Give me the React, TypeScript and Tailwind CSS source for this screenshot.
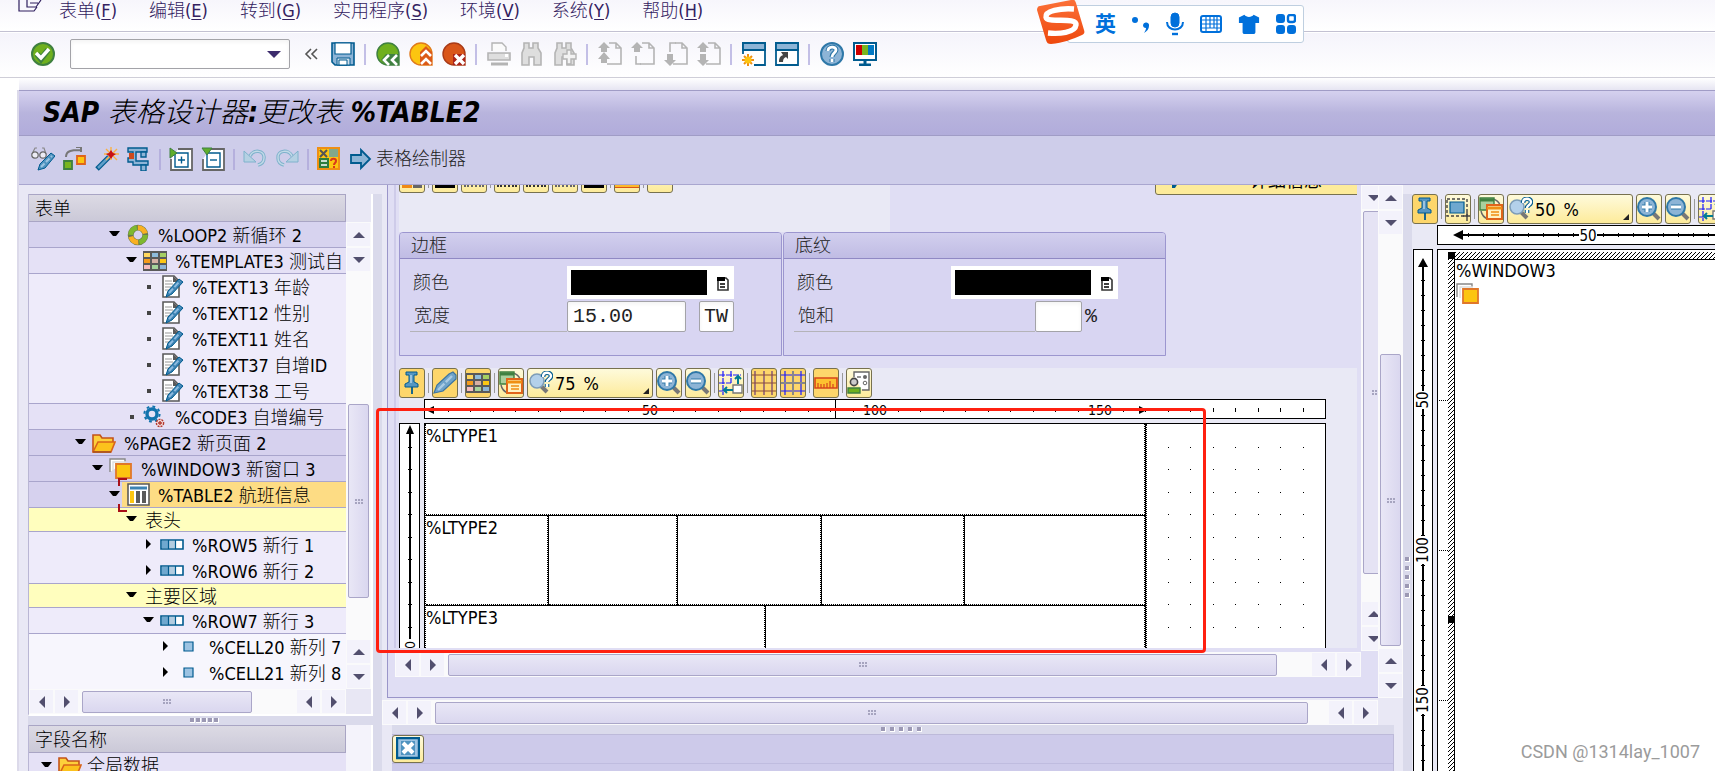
import type { ReactNode } from 'react';

const SANS = "font-['DejaVu_Sans_Condensed','Noto_Sans_CJK_SC',sans-serif]";

/* ---------- 共通アイコン枠 ---------- */

const Icon = ({ children, className = 'w-6 h-6' }: { children: ReactNode; className?: string }) => (
  <svg viewBox="0 0 24 24" className={`${className} shrink-0`} fill="none" aria-hidden="true">
    {children}
  </svg>
);

const BLUE = '#005b8f';
const SKY = '#8db4d6';
const GRAY = '#b4b4b4';

const OkIcon = () => (
  <Icon>
    <circle cx="12" cy="12" r="11" fill="#6fb01e" stroke="#3f8040" strokeWidth="2" />
    <path d="M6 12l4 5 7-9" stroke="#3f8040" strokeWidth="6" />
    <path d="M5 11l5 5 8-9" stroke="#fff" strokeWidth="3.4" />
  </Icon>
);

const SaveIcon = () => (
  <Icon>
    <path d="M1 1h22v22H4l-3-3z" fill={SKY} stroke={BLUE} strokeWidth="1.6" />
    <path d="M4 1h16v11H4z" fill="#fff" stroke={BLUE} strokeWidth="1.2" />
    <path d="M6 16h13v7H6z" fill="#cfdfec" stroke={BLUE} />
    <path d="M8 18h8v5H8z" fill="#fff" stroke={BLUE} />
  </Icon>
);

const BackIcon = () => (
  <Icon>
    <path d="M12 1a11 11 0 1 0 0 22h11V12A11 11 0 0 0 12 1z" fill="#6fb01e" stroke="#3f8040" strokeWidth="1.4" />
    <path d="M10 12h13v11H10l-5-5z" fill="#3f8040" />
    <path d="M13 13l-5 5 5 5M21 13l-5 5 5 5" stroke="#fff" strokeWidth="2.6" />
  </Icon>
);

const ExitIcon = () => (
  <Icon>
    <path d="M12 1a11 11 0 1 0 0 22h11V12A11 11 0 0 0 12 1z" fill="#fcc510" stroke="#e07a1b" strokeWidth="1.4" />
    <path d="M11 10l6-6 6 6v13H11z" fill="#dc5a17" />
    <path d="M12 14l5-5 5 5M12 22l5-5 5 5" stroke="#fff" strokeWidth="2.6" />
  </Icon>
);

const CancelIcon = () => (
  <Icon>
    <path d="M12 1a11 11 0 1 0 0 22h11V12A11 11 0 0 0 12 1z" fill="#d9561a" stroke="#a93b18" strokeWidth="1.4" />
    <path d="M11 12h12v11H11z" fill="#ab2318" />
    <path d="M13 13l9 9M22 13l-9 9" stroke="#fff" strokeWidth="3.4" />
  </Icon>
);

const PrintIcon = () => (
  <Icon>
    <path d="M5 9V1h10l4 4v4" fill="#fafafa" stroke={GRAY} strokeWidth="1.4" />
    <path d="M1 11h22v7H1z" fill="#dedede" stroke={GRAY} strokeWidth="1.6" />
    <path d="M18 12h3v3h-3z" fill="#fff" />
    <path d="M4 22h17" stroke={GRAY} strokeWidth="3" />
  </Icon>
);

const FindIcon = ({ plus = false }: { plus?: boolean }) => (
  <Icon>
    <path d="M4 1h5v5h4V1h5v5l3 5v12h-7v-8h-5v8H2V11l2-5z" fill="#dedede" stroke={GRAY} strokeWidth="1.6" />
    {plus && <path d="M14 8h4v4h5v5h-5v5h-4v-5h-4v-5h4z" fill="#f2f2f2" stroke={GRAY} strokeWidth="1.4" />}
  </Icon>
);

const PageIcon = ({ up = false, down = false, low = false }: { up?: boolean; down?: boolean; low?: boolean }) => (
  <Icon>
    <path d="M11 1h7l5 5v16H9M18 1v5h5" stroke={GRAY} strokeWidth="1.6" />
    {up && <path d="M6 0l6 6H9v4H3V6H0z" fill={GRAY} />}
    {up && down && <path d="M6 10l6 7H9v4H3v-4H0z" fill={GRAY} />}
    {up && !down && !low && <path d="M5 14v8h5" stroke={GRAY} strokeWidth="1.6" />}
    {low && <path d="M6 24l6-6H9v-6H3v6H0z" fill={GRAY} />}
    {!up && <path d="M6 10V1h6" stroke={GRAY} strokeWidth="1.6" />}
  </Icon>
);

const SessionIcon = ({ shortcut = false }: { shortcut?: boolean }) => (
  <Icon>
    <path d="M1 1h22v22H1z" fill="#fff" stroke={BLUE} strokeWidth="1.8" />
    <path d="M1 1h22v7H1z" fill={SKY} stroke={BLUE} strokeWidth="1.8" />
    {shortcut ? (
      <path d="M4 20c0-5 2-6 4-7l-2-3h7v7l-2-2c-2 1-3 2-3 5z" fill="#444" />
    ) : (
      <g>
        <path d="M0 12h12v12H0z" fill="#fff" />
        <path d="M6 12v12M0 18h12M2 14l8 8M10 14l-8 8" stroke="#ef8f13" strokeWidth="2" />
        <circle cx="6" cy="18" r="3.5" fill="#fcc510" />
      </g>
    )}
  </Icon>
);

const HelpIcon = () => (
  <Icon>
    <circle cx="12" cy="12" r="11" fill={SKY} stroke="#2f78a8" strokeWidth="2" />
    <path d="M8 9c0-5 8-5 8-1 0 3-4 3-4 7M12 17v3" stroke="#2f78a8" strokeWidth="5" />
    <path d="M8 9c0-5 8-5 8-1 0 3-4 3-4 7M12 17v3" stroke="#fff" strokeWidth="2.8" />
  </Icon>
);

const MonitorIcon = () => (
  <Icon>
    <path d="M1 1h22v17H1z" fill="#fff" stroke={BLUE} strokeWidth="2" />
    <path d="M3 3h6v10H3z" fill="#c00" />
    <path d="M9 3h6v10H9z" fill="#79b51f" />
    <path d="M15 3h6v10h-6z" fill="#0079c4" />
    <path d="M12 18v4M6 23h12" stroke={BLUE} strokeWidth="3" />
  </Icon>
);

const DisplayEditIcon = () => (
  <Icon>
    <path d="M1 7l3-6h2M15 7l-2-6h-2" stroke="#888" strokeWidth="1.2" />
    <circle cx="4" cy="8" r="3.2" fill="#ececf4" stroke="#666" strokeWidth="1.2" />
    <circle cx="12" cy="8" r="3.2" fill="#ececf4" stroke="#666" strokeWidth="1.2" />
    <path d="M7 23l2-6L20 6l4 3-10 12z" fill="#4f93c0" stroke={BLUE} />
    <path d="M10 20L21 9" stroke="#9cc4e0" strokeWidth="2" strokeDasharray="5 2" />
  </Icon>
);

const OtherObjectIcon = () => (
  <Icon>
    <path d="M3 10C3 4 8 3 17 3M13 0h5v5" stroke="#777" strokeWidth="2" />
    <path d="M1 14h8v8H1z" fill="#79b51f" stroke="#3f8040" strokeWidth="1.8" />
    <path d="M14 9h8v8h-8z" fill="#fcc510" stroke="#e0641b" strokeWidth="1.8" />
  </Icon>
);

const WandIcon = () => (
  <Icon>
    <path d="M2 22L14 10" stroke={BLUE} strokeWidth="5" />
    <path d="M3 21L14 10" stroke="#5f9ec8" strokeWidth="2.5" />
    <path d="M16 0v13M9 7h15M11 2l11 11M22 2L11 13" stroke="#fbb040" strokeWidth="1.4" />
    <path d="M16 3l2 3 3 1-3 2-2 3-2-3-3-2 3-1z" fill="#c80f14" />
  </Icon>
);

const CheckFormIcon = () => (
  <Icon>
    <path d="M1 1h19v4H9v9h12v4H6v-3H1v-4h5V5H1z" fill={SKY} stroke={BLUE} strokeWidth="1.4" />
    <path d="M14 5h5v5h-5zM14 18h5v6h-5z" fill={SKY} stroke={BLUE} strokeWidth="1.4" />
    <path d="M2 6h5v6H2z" fill="#cf4a1d" />
  </Icon>
);

const NodeIcon = ({ minus = false }: { minus?: boolean }) => (
  <Icon>
    <path d="M9 2h14v21H2V12" fill="#fff" stroke="#666" strokeWidth="1.8" />
    <path d="M6 6h13v14H6z" fill="#fff" stroke={BLUE} strokeWidth="1.4" />
    <path d={minus ? 'M9 13h7' : 'M9 13h7M12.5 9.5v7'} stroke={BLUE} strokeWidth="1.4" />
    <path d={minus ? 'M1 1h10L6 8z' : 'M1 1v10l7-5z'} fill="#5fae2c" stroke="#3f8040" />
  </Icon>
);

const UndoIcon = ({ redo = false }: { redo?: boolean }) => (
  <Icon>
    <g transform={redo ? 'translate(24 0) scale(-1 1)' : undefined}>
      <path d="M7 9c3-7 15-6 14 2 0 4-2 6-6 7" stroke="#7fb2cc" strokeWidth="3.4" />
      <path d="M7 9c3-7 15-6 14 2 0 4-2 6-6 7" stroke="#c3dae8" strokeWidth="1.4" />
      <path d="M1 4v11h12z" fill="#b5d1e3" stroke="#7fb2cc" />
    </g>
  </Icon>
);

const FieldListIcon = () => (
  <Icon>
    <path d="M1 1h21v21H1z" fill="#fcc510" stroke="#ef8f13" strokeWidth="2" />
    <path d="M12 2h9v8h-9z" fill="#83a88a" />
    <path d="M2 11h10v10H2z" fill="#2f7d3d" />
    <path d="M3 3l7 7M10 3l-7 7" stroke="#555" strokeWidth="2" />
    <path d="M4 14h6M4 18h6" stroke="#fff" strokeWidth="1.6" />
    <path d="M14 14c0-3 5-3 5 0 0 2-2 2-2 4M17 19v2" stroke="#d9381a" strokeWidth="2" />
  </Icon>
);

const ArrowIcon = () => (
  <Icon>
    <path d="M2 8h10V3l9 9-9 9v-5H2z" fill={SKY} stroke={BLUE} strokeWidth="1.8" />
  </Icon>
);

const LoopIcon = () => (
  <Icon className="w-[22px] h-[22px]">
    <circle cx="12" cy="12" r="8" stroke="#6a7a4a" strokeWidth="6.4" />
    <circle cx="12" cy="12" r="8" stroke="#f9b021" strokeWidth="5.4" strokeDasharray="11 14.13" strokeDashoffset="13" />
    <circle cx="12" cy="12" r="8" stroke="#7eb82f" strokeWidth="5.4" strokeDasharray="11 14.13" />
  </Icon>
);

const GridIcon = () => (
  <Icon>
    <path d="M0 2h24v20H0z" fill="#5a5a5a" />
    {['#ffd75e', '#8fbcdc', '#a5cf62', '#f59b1b', '#d6b0a4', '#fdc613', '#f6bcbc', '#a5d39b', '#8db4d6'].map((c, i) => (
      <rect key={i} x={1 + (i % 3) * 8} y={4 + Math.floor(i / 3) * 6} width="6" height="4" fill={c} />
    ))}
  </Icon>
);

const TextIcon = () => (
  <Icon>
    <path d="M3 1h11l5 5v16H3z" fill="#fff" stroke="#5a5a5a" strokeWidth="1.6" />
    <path d="M13 1v6h6z" fill="#5a5a5a" />
    <path d="M5 6h7M5 9h8M5 12h6M5 15h4" stroke="#bbb" strokeWidth="1.4" />
    <path d="M6 22l2-6L19 4l4 3-11 12z" fill="#3d83b3" stroke={BLUE} />
    <path d="M9 18L20 6" stroke="#8dbbe0" strokeWidth="2" strokeDasharray="6 2" />
  </Icon>
);

const CodeIcon = () => (
  <Icon>
    <circle cx="9" cy="9" r="5" stroke="#1173ad" strokeWidth="3.4" />
    <circle cx="9" cy="9" r="7.6" stroke="#1173ad" strokeWidth="2" strokeDasharray="2.8 3.2" />
    <circle cx="17" cy="18" r="3.6" fill="#f3dcdc" stroke="#b3392f" strokeWidth="1.4" strokeDasharray="2 1" />
    <path d="M17 16v4M15 18h4" stroke="#b3392f" strokeWidth="1.4" />
  </Icon>
);

const FolderIcon = () => (
  <Icon>
    <path d="M1 21V4h7l2 3h11v5" fill="#fdd03b" stroke="#c4531a" strokeWidth="1.6" />
    <path d="M1 21l5-10h17l-4 10z" fill="#fcc21c" stroke="#d9641b" strokeWidth="1.6" />
    <path d="M1 21h18" stroke="#a8521b" strokeWidth="1.6" />
  </Icon>
);

const WindowIcon = () => (
  <Icon>
    <path d="M1 15V2h15v3" fill="#fff" stroke="#888" strokeWidth="1.4" />
    <path d="M4 16V5h13" stroke="#ddd" strokeWidth="1.4" />
    <path d="M7 7h15v14H7z" fill="#fcc510" stroke="#e0772a" strokeWidth="1.8" />
  </Icon>
);

const TableIcon = () => (
  <Icon>
    <path d="M1 1h21v21H1z" fill="#fff" stroke="#5a5a5a" strokeWidth="1.6" />
    <path d="M3 5h17" stroke="#3d83b3" strokeWidth="3" />
    <path d="M5 8v12" stroke="#fcc510" strokeWidth="4" />
    <path d="M11 8v12M17 8v12" stroke="#5a5a5a" strokeWidth="4" />
  </Icon>
);

const RowIcon = () => (
  <Icon>
    <path d="M1 7h22v9H1z" fill="#fff" stroke={BLUE} strokeWidth="1.6" />
    <path d="M2 8h6v7H2z" fill="#6fa8cf" />
    <path d="M9 8h6v7H9z" fill="#b3cde0" />
    <path d="M8.500 7v9M15.500 7v9" stroke={BLUE} strokeWidth="1.2" />
  </Icon>
);

const CellIcon = () => (
  <Icon>
    <path d="M7 7h9v9H7z" fill="#9cc3e2" stroke={BLUE} strokeWidth="1.2" />
  </Icon>
);

const PinIcon = () => (
  <Icon>
    <path d="M6 1h11v3h-3v7l4 2v3H5v-3l4-2V4H6z" fill="#5596c2" stroke={BLUE} strokeWidth="1" />
    <path d="M11 4v8" stroke="#b9d7ec" strokeWidth="1.4" />
    <path d="M12 16v7" stroke={BLUE} strokeWidth="1.8" />
  </Icon>
);

const PencilIcon = () => (
  <Icon>
    <path d="M1 22l3-8L16 3l4-2 3 3v4L10 20z" fill="#6fa3c9" stroke="#3b74a0" strokeWidth="1.2" />
    <path d="M5 19L19 5" stroke="#a9cbe4" strokeWidth="2.4" strokeDasharray="9 2" />
  </Icon>
);

const CopyFormIcon = () => (
  <Icon>
    <path d="M14 2a10 10 0 0 1 7 6M2 14c1 5 4 7 7 8" stroke="#666" strokeWidth="1.4" />
    <path d="M1 1h14v12H1z" fill="#a9cf9d" stroke="#3f8040" strokeWidth="1.4" />
    <path d="M1 3h14" stroke="#3f8040" strokeWidth="3" />
    <path d="M8 8h15v14H8z" fill="#fff3c4" stroke="#e0641b" strokeWidth="2" />
    <path d="M8 11h15" stroke="#ef8f13" strokeWidth="3" />
    <path d="M12 15h8M12 18h8" stroke="#ef8f13" strokeWidth="1.4" />
  </Icon>
);

const ZoomHelpIcon = () => (
  <Icon>
    <path d="M12 15l6 6" stroke="#777" strokeWidth="4" />
    <circle cx="8" cy="10" r="7" fill="#b3d0ea" stroke="#7e9db8" strokeWidth="1.6" />
    <path d="M14 6c0-6 8-5 8-1 0 3-4 3-4 6M18 13v3" stroke={BLUE} strokeWidth="4.6" />
    <path d="M14 6c0-6 8-5 8-1 0 3-4 3-4 6M18 13v3" stroke="#fff" strokeWidth="2.4" />
  </Icon>
);

const ZoomIcon = ({ out = false }: { out?: boolean }) => (
  <Icon>
    <path d="M16 16l6 6" stroke="#777" strokeWidth="4" />
    <circle cx="10" cy="10" r="9" fill={SKY} stroke="#2f78a8" strokeWidth="2" />
    <path d={out ? 'M5 10h10' : 'M5 10h10M10 5v10'} stroke="#2f78a8" strokeWidth="5" />
    <path d={out ? 'M5 10h10' : 'M5 10h10M10 5v10'} stroke="#fff" strokeWidth="3" />
  </Icon>
);

const SnapIcon = () => (
  <Icon>
    <path d="M0 4h22M0 12h12M4 0v24M12 0v12M0 20h8" stroke="#1a1aff" strokeWidth="1.2" strokeDasharray="6 1" />
    <path d="M14 14h9v8h-9z" fill="#fff" stroke="#777" strokeWidth="1.4" />
    <path d="M19 13V6M16 8l3-3 3 3M14 19H6M8 16l-3 3 3 3" stroke="#007c93" strokeWidth="2" />
  </Icon>
);

const RasterIcon = ({ fine = false }: { fine?: boolean }) => (
  <Icon>
    {fine ? (
      <g>
        <path d="M0 4h24M0 20h24M4 0v24M20 0v24" stroke="#1a1aff" strokeWidth="1.2" />
        <path d="M0 12h24M12 0v24" stroke="#888" strokeWidth="2" />
      </g>
    ) : (
      <g>
        <path d="M3 0v24M12 0v24M20 0v24" stroke="#6b3a7a" strokeWidth="1.2" />
        <path d="M0 4h24M0 12h24M0 20h24" stroke="#8a4a3c" strokeWidth="1.2" />
      </g>
    )}
  </Icon>
);

const RulerIcon = () => (
  <Icon>
    <path d="M1 7h22v10H1z" fill="#fdc130" stroke="#d6451b" strokeWidth="1.6" />
    <path d="M4 17v-5M7 17v-4M10 17v-4M13 17v-5M16 17v-7M19 17v-4" stroke="#d6451b" strokeWidth="1.2" />
  </Icon>
);

const UserFormIcon = () => (
  <Icon>
    <path d="M7 6V1h15v18h-7" fill="#fff" stroke="#666" strokeWidth="1.4" />
    <path d="M10 6h4" stroke="#666" strokeWidth="1.4" />
    <circle cx="18" cy="6" r="2" fill="#666" />
    <circle cx="18" cy="12" r="1.800" stroke="#666" />
    <circle cx="7" cy="11" r="3.6" fill="#ccc" stroke="#444" strokeWidth="1.6" />
    <path d="M1 17h12v5H1z" fill="#6fb01e" stroke="#3f8040" strokeWidth="1.4" />
  </Icon>
);

const SelectAreaIcon = () => (
  <Icon>
    <path d="M1 2h20v17H1z" stroke="#444" strokeWidth="1.4" strokeDasharray="3 2" />
    <path d="M4 5h14v11H4z" fill="#6fa8cf" stroke={BLUE} strokeWidth="1.2" />
    <path d="M21 15v9M17 19h7" stroke="#444" strokeWidth="1.4" />
  </Icon>
);

const CloseBoxIcon = () => (
  <Icon>
    <path d="M1 1h22v20H1z" fill="#9cc3e2" stroke={BLUE} strokeWidth="2.4" />
    <path d="M5 4h14v14H5z" fill="#4f93c0" />
    <path d="M7 6l10 10M17 6L7 16" stroke="#fff" strokeWidth="4" />
  </Icon>
);

const ClipIcon = () => (
  <svg viewBox="0 0 14 16" className="w-[14px] h-4 shrink-0" fill="none" aria-hidden="true">
    <path d="M2 5v9h10V4l-2-2H2z" fill="#fff" stroke="#333" strokeWidth="1.6" />
    <path d="M1 1h8v4H1z" fill="#000" />
    <path d="M4 8h5M4 11h5" stroke="#000" strokeWidth="1.400" />
  </svg>
);

/* ---------- 共通パーツ ---------- */

const IconButton = ({ label, children }: { label: string; children: ReactNode }) => (
  <button type="button" aria-label={label} className="shrink-0">
    {children}
  </button>
);

const Sep = () => <span className="w-[3px] h-[21px] border-l-2 border-[#c3bfe6] shrink-0" />;

const YellowButton = ({ label, on = false, children }: { label: string; on?: boolean; children?: ReactNode }) => (
  <button
    type="button"
    aria-label={label}
    className={`w-[26px] h-[30px] shrink-0 flex items-center justify-center rounded-[3px] border border-[#77714f] ${
      on ? 'bg-[#fdd66b]' : 'bg-gradient-to-b from-[#fefadb] to-[#fdeb9a]'
    }`}
  >
    {children}
  </button>
);

const ThinSep = () => <span className="w-px h-5 bg-[#9a9a9a] shrink-0" />;

const ZoomSelect = ({ value }: { value: string }) => (
  <button
    type="button"
    className="w-[126px] h-[30px] shrink-0 flex items-center pl-px rounded-[3px] border border-[#77714f] bg-gradient-to-b from-[#fefadb] to-[#fdeb9a] text-lg leading-6"
  >
    <ZoomHelpIcon />
    <span className="ml-[2px] pt-px flex gap-2">
      <span>{value}</span>
      <span>%</span>
    </span>
    <svg viewBox="0 0 6 6" className="w-[6px] h-[6px] ml-auto mr-[3px] mt-4" aria-hidden="true">
      <path d="M6 0v6H0z" fill="#222" />
    </svg>
  </button>
);

type Dir = 'up' | 'down' | 'left' | 'right';

const ARROWS: Record<Dir, string> = {
  up: 'M7 4l6 6H1z',
  down: 'M1 4h12l-6 6z',
  left: 'M4 7l6-6v12z',
  right: 'M4 1l6 6-6 6z',
};

const ScrollButton = ({ dir }: { dir: Dir }) => (
  <button
    type="button"
    aria-label={dir}
    className="w-[23px] h-[23px] m-px shrink-0 flex items-center justify-center bg-[#f3f2fb]"
  >
    <svg viewBox="0 0 14 14" className="w-[14px] h-[14px]" aria-hidden="true">
      <path d={ARROWS[dir]} fill="#524f6e" />
    </svg>
  </button>
);

const Grip = () => (
  <span className="grid grid-cols-3 gap-px">
    {[0, 1, 2, 3, 4, 5].map((i) => (
      <span key={i} className="w-[2px] h-[2px] bg-[#a6a4bf]" />
    ))}
  </span>
);

const THUMB = 'flex items-center justify-center rounded-[2px] border border-[#aaa6c8] shrink-0';

const HScroll = ({ thumb, rest }: { thumb: string; rest: string }) => (
  <div className="flex items-center bg-[#fafafb]">
    <ScrollButton dir="left" />
    <ScrollButton dir="right" />
    <div className={`${THUMB} ${thumb} h-[22px] ml-[3px] bg-gradient-to-b from-[#e9e7f6] to-[#dad7ef]`}>
      <Grip />
    </div>
    <div className={rest} />
    <ScrollButton dir="left" />
    <ScrollButton dir="right" />
  </div>
);

const Dots = ({ layout }: { layout: string }) => (
  <span className={`flex ${layout}`}>
    {[0, 1, 2, 3, 4].map((i) => (
      <span key={i} className="w-[5px] h-[5px] bg-[#9c99b4] border-b border-r border-white" />
    ))}
  </span>
);

/* ---------- 上部メニュー ---------- */

const MENUS = [
  ['表单', 'F'],
  ['编辑', 'E'],
  ['转到', 'G'],
  ['实用程序', 'S'],
  ['环境', 'V'],
  ['系统', 'Y'],
  ['帮助', 'H'],
];

const MenuBar = () => (
  <nav className="h-8 shrink-0 flex items-start gap-8 pl-[59px] border-b border-[#c3c1d2] bg-gradient-to-b from-[#f7f6fc] to-white relative overflow-hidden">
    <svg viewBox="0 0 24 14" className="w-6 h-[14px] absolute left-[18px] top-0" fill="none" aria-hidden="true">
      <path d="M1 0v11h15l3-4M9 0v7h9l5-7M12 3h8" stroke="#2e1f5e" strokeWidth="1.2" />
    </svg>
    {MENUS.map(([name, key]) => (
      <button key={key} type="button" className="text-[18px] leading-[22px] text-[#33215f] whitespace-nowrap">
        <span className="font-light">{name}</span>(<u className="underline-offset-2">{key}</u>)
      </button>
    ))}
  </nav>
);

const MainToolbar = () => (
  <div className="h-[45px] mt-px shrink-0 flex items-center gap-[9px] pl-[31px] pb-[2px] border-b border-[#cfced8] bg-gradient-to-b from-[#f5f4fb] to-white">
    <IconButton label="确认"><OkIcon /></IconButton>
    <div className="w-[220px] h-[30px] ml-[6px] flex items-center border border-[#a3a3a8] rounded-[2px] bg-white shadow-inner">
      <input aria-label="命令" className="flex-1 min-w-0 h-full px-1 text-lg outline-none bg-transparent" />
      <button type="button" aria-label="历史" className="w-[30px] flex justify-center">
        <svg viewBox="0 0 14 8" className="w-[14px] h-2" aria-hidden="true">
          <path d="M0 1h14L7 8z" fill="#3d2c6d" />
        </svg>
      </button>
    </div>
    <button type="button" aria-label="收起" className="w-[23px] flex justify-center">
      <svg viewBox="0 0 14 12" className="w-[14px] h-3" fill="none" aria-hidden="true">
        <path d="M7 1L2 6l5 5M13 1L8 6l5 5" stroke="#555" strokeWidth="1.600" />
      </svg>
    </button>
    <IconButton label="保存"><SaveIcon /></IconButton>
    <Sep />
    <IconButton label="返回"><BackIcon /></IconButton>
    <IconButton label="退出"><ExitIcon /></IconButton>
    <IconButton label="取消"><CancelIcon /></IconButton>
    <Sep />
    <IconButton label="打印"><PrintIcon /></IconButton>
    <IconButton label="查找"><FindIcon /></IconButton>
    <IconButton label="继续查找"><FindIcon plus /></IconButton>
    <Sep />
    <IconButton label="首页"><PageIcon up down /></IconButton>
    <IconButton label="上一页"><PageIcon up /></IconButton>
    <IconButton label="下一页"><PageIcon low /></IconButton>
    <IconButton label="末页"><PageIcon up low /></IconButton>
    <Sep />
    <IconButton label="新建会话"><SessionIcon /></IconButton>
    <IconButton label="快捷方式"><SessionIcon shortcut /></IconButton>
    <Sep />
    <IconButton label="帮助"><HelpIcon /></IconButton>
    <IconButton label="布局"><MonitorIcon /></IconButton>
  </div>
);

const TitleBar = () => (
  <header className="h-[46px] shrink-0 pl-6 flex items-center border-y border-[#a09cc6] bg-gradient-to-b from-[#d5d1ef] via-[#b8b4dd] to-[#b1acdb]">
    <h1 className="text-[28px] leading-8 pb-px font-bold italic whitespace-nowrap">
      SAP <span className="font-light">表格设计器</span>:
      <span className="font-light">更改表</span> %TABLE2
    </h1>
  </header>
);

const AppToolbar = () => (
  <div className="h-[49px] shrink-0 flex items-center gap-2 pl-3 pb-[2px] border-b border-[#a9a6cf] bg-[#cecdea]">
    <IconButton label="显示/更改"><DisplayEditIcon /></IconButton>
    <IconButton label="其他对象"><OtherObjectIcon /></IconButton>
    <IconButton label="激活"><WandIcon /></IconButton>
    <IconButton label="检查"><CheckFormIcon /></IconButton>
    <span className="w-[2px] h-[21px] bg-[#b5b0dd]" />
    <IconButton label="展开"><NodeIcon /></IconButton>
    <IconButton label="折叠"><NodeIcon minus /></IconButton>
    <span className="w-[2px] h-[21px] bg-[#b5b0dd]" />
    <IconButton label="撤销"><UndoIcon /></IconButton>
    <IconButton label="重做"><UndoIcon redo /></IconButton>
    <span className="w-[2px] h-[21px] bg-[#b5b0dd]" />
    <IconButton label="字段列表"><FieldListIcon /></IconButton>
    <button type="button" className="flex items-center gap-[3px] text-lg leading-6 font-light text-[#222]">
      <ArrowIcon />
      表格绘制器
    </button>
  </div>
);

/* ---------- 左側ツリー ---------- */

type TreeRow = {
  depth: number;
  mark: 'open' | 'closed' | 'leaf';
  icon?: ReactNode;
  code?: string;
  name: string;
  tail?: string;
  bg: string;
  line?: boolean;
  selected?: boolean;
};

const TREE: TreeRow[] = [
  { depth: 2, mark: 'open', icon: <LoopIcon />, code: '%LOOP2', name: '新循环', tail: '2', bg: 'bg-[#d7d3ef]', line: true },
  { depth: 3, mark: 'open', icon: <GridIcon />, code: '%TEMPLATE3', name: '测试自', bg: 'bg-[#e5e1f6]', line: true },
  { depth: 4, mark: 'leaf', icon: <TextIcon />, code: '%TEXT13', name: '年龄', bg: 'bg-[#eeebfa]' },
  { depth: 4, mark: 'leaf', icon: <TextIcon />, code: '%TEXT12', name: '性别', bg: 'bg-[#eeebfa]' },
  { depth: 4, mark: 'leaf', icon: <TextIcon />, code: '%TEXT11', name: '姓名', bg: 'bg-[#eeebfa]' },
  { depth: 4, mark: 'leaf', icon: <TextIcon />, code: '%TEXT37', name: '自增ID', bg: 'bg-[#eeebfa]' },
  { depth: 4, mark: 'leaf', icon: <TextIcon />, code: '%TEXT38', name: '工号', bg: 'bg-[#eeebfa]', line: true },
  { depth: 3, mark: 'leaf', icon: <CodeIcon />, code: '%CODE3', name: '自增编号', bg: 'bg-[#e5e1f6]', line: true },
  { depth: 0, mark: 'open', icon: <FolderIcon />, code: '%PAGE2', name: '新页面', tail: '2', bg: 'bg-[#d6d1ee]', line: true },
  { depth: 1, mark: 'open', icon: <WindowIcon />, code: '%WINDOW3', name: '新窗口', tail: '3', bg: 'bg-[#d6d1ee]', line: true },
  { depth: 2, mark: 'open', icon: <TableIcon />, code: '%TABLE2', name: '航班信息', bg: 'bg-[#d6d1ee]', line: true, selected: true },
  { depth: 3, mark: 'open', name: '表头', bg: 'bg-[#fffebe]', line: true },
  { depth: 4, mark: 'closed', icon: <RowIcon />, code: '%ROW5', name: '新行', tail: '1', bg: 'bg-[#eeebfa]' },
  { depth: 4, mark: 'closed', icon: <RowIcon />, code: '%ROW6', name: '新行', tail: '2', bg: 'bg-[#eeebfa]', line: true },
  { depth: 3, mark: 'open', name: '主要区域', bg: 'bg-[#fffebe]', line: true },
  { depth: 4, mark: 'open', icon: <RowIcon />, code: '%ROW7', name: '新行', tail: '3', bg: 'bg-[#eeebfa]', line: true },
  { depth: 5, mark: 'closed', icon: <CellIcon />, code: '%CELL20', name: '新列', tail: '7', bg: 'bg-[#f7f6fd]' },
  { depth: 5, mark: 'closed', icon: <CellIcon />, code: '%CELL21', name: '新列', tail: '8', bg: 'bg-[#f7f6fd]' },
];

const Mark = ({ kind }: { kind: TreeRow['mark'] }) => (
  <svg viewBox="0 0 12 12" className="w-3 h-3 shrink-0" aria-hidden="true">
    {kind === 'open' && <path d="M1 2h11L8 7H5z" />}
    {kind === 'closed' && <path d="M4 0l5 5-5 5z" />}
    {kind === 'leaf' && <path d="M5 4h4v4H5z" fill="#444" />}
  </svg>
);

const TreeItem = ({ row }: { row: TreeRow }) => (
  <li
    className={`relative flex items-center whitespace-nowrap ${row.icon ? 'h-[26px]' : 'h-6'} ${row.bg} ${
      row.line ? 'border-b border-[#a9a5cc]' : ''
    }`}
    style={{ paddingLeft: 45 + row.depth * 17 }}
  >
    <Mark kind={row.mark} />
    {row.selected && (
      <svg viewBox="0 0 9 34" className="w-[9px] h-[34px] absolute left-[89px] top-[-4px] z-10" fill="none" aria-hidden="true">
        <path d="M9 1H1v7M1 26v7h8" stroke="#a80f18" strokeWidth="2" />
      </svg>
    )}
    <span className={`flex-1 h-full flex items-center overflow-hidden ${row.selected ? 'ml-[2px] bg-[#fddc84]' : ''}`}>
      {row.icon && (
        <span className={`flex justify-center shrink-0 ${row.selected ? 'w-[34px]' : 'w-9'}`}>{row.icon}</span>
      )}
      <span className={`pt-[2px] ${row.icon ? 'ml-[2px]' : 'ml-2'}`}>
        {row.code} <span className="font-light">{row.name}</span> {row.tail}
      </span>
    </span>
  </li>
);

const ListHeader = ({ text }: { text: string }) => (
  <div className="h-7 shrink-0 pl-[6px] pt-px flex items-center border-t border-b border-r border-[#a9a5c4] bg-gradient-to-b from-[#dcdae4] to-[#cbc9d8] text-lg leading-6 font-light">
    {text}
  </div>
);

const FormTree = () => (
  <section className="shrink-0 flex flex-col border-l border-[#b9b6d4] border-b-2 border-b-white border-r-2 border-r-white">
    <div className="flex">
      <div className="flex-1 min-w-0">
        <ListHeader text="表单" />
        <ul className="h-[467px] overflow-hidden bg-[#f7f6fd] text-[18px] leading-[22px]">
          {TREE.map((row, i) => (
            <TreeItem key={i} row={row} />
          ))}
        </ul>
      </div>
      <div className="w-[25px] flex flex-col bg-[#fafafb]">
        <div className="h-7 bg-[#e9e8f5]" />
        <ScrollButton dir="up" />
        <ScrollButton dir="down" />
        <div className="flex-1" />
        <div className={`${THUMB} h-[194px] w-[21px] mx-auto bg-gradient-to-r from-[#e9e7f6] to-[#dad7ef]`}>
          <Grip />
        </div>
        <div className="h-[41px]" />
        <ScrollButton dir="up" />
        <ScrollButton dir="down" />
      </div>
    </div>
    <div className="pr-[25px] bg-[#e8e7f4]">
      <HScroll thumb="w-[170px]" rest="flex-1" />
    </div>
  </section>
);

const FieldTree = () => (
  <section className="flex-1 min-h-0 overflow-hidden border-l border-[#b9b6d4] border-r-2 border-r-white bg-[#f4f3fb] pr-[25px]">
    <ListHeader text="字段名称" />
    <div className="h-[26px] flex items-center pl-[11px] bg-[#e5e1f6] text-lg leading-6 font-light">
      <Mark kind="open" />
      <span className="w-[35px] pl-[6px] flex"><FolderIcon /></span>
      全局数据
    </div>
  </section>
);

/* ---------- 中央エリア ---------- */

const BorderToolbar = () => (
  <div className="h-[47px] shrink-0 flex justify-between items-start">
    <div className="w-[491px] h-full flex gap-[3px] items-start bg-[#e9e9f5]">
      <div className="flex items-center gap-[3px] -mt-[22px]">
        <YellowButton label="边框样式">
          <svg viewBox="0 0 20 20" className="w-5 h-5 mt-1" aria-hidden="true">
            <path d="M0 14h10v4H0z" fill="#f08a13" />
            <path d="M11 14h9v4h-9z" fill="#666" />
          </svg>
        </YellowButton>
        <ThinSep />
        <YellowButton label="全部框线"><span className="w-5 h-[3px] mt-4 bg-black" /></YellowButton>
        <YellowButton label="无框线"><span className="w-5 mt-4 border-b-2 border-dotted border-[#666]" /></YellowButton>
        <ThinSep />
        <YellowButton label="左框线"><span className="w-5 mt-4 border-b-2 border-dotted border-[#333]" /></YellowButton>
        <YellowButton label="右框线"><span className="w-5 mt-4 border-b-2 border-dotted border-[#333]" /></YellowButton>
        <YellowButton label="上框线"><span className="w-5 mt-4 border-b-2 border-dotted border-[#666]" /></YellowButton>
        <YellowButton label="下框线"><span className="w-5 h-[3px] mt-4 bg-black" /></YellowButton>
        <ThinSep />
        <YellowButton label="底纹"><span className="w-6 h-2 mt-3 bg-[#fdb92a] border-b border-[#d9561a]" /></YellowButton>
        <ThinSep />
        <YellowButton label="其他" />
      </div>
    </div>
    <button
      type="button"
      className="w-[206px] h-[30px] -mt-5 -mr-1 pl-[14px] flex items-center rounded-[3px] border border-[#77714f] bg-[#fdeb9a] text-[18px] leading-6"
    >
      <svg viewBox="0 0 14 20" className="w-[14px] h-5" aria-hidden="true">
        <path d="M2 10h8l-5 8H2z" fill={BLUE} />
      </svg>
      <span className="ml-[66px] pt-px">详细信息</span>
    </button>
  </div>
);

const ColorField = ({ label }: { label: string }) => (
  <div className="w-[167px] h-[33px] pl-1 pr-1 flex items-center justify-between bg-white">
    <button type="button" aria-label={label} className="w-[136px] h-[25px] bg-black" />
    <button type="button" aria-label={`${label}选择`} className="pt-[2px]"><ClipIcon /></button>
  </div>
);

const FIELD = 'h-[31px] border border-[#a3a3a8] rounded-[2px] bg-white outline-none shadow-inner';

const Group = ({ title, children }: { title: string; children: ReactNode }) => (
  <fieldset className="w-[383px] h-[124px] border border-[#9c96cf] rounded-t-[4px] bg-[#d8d5f2] text-[18px] leading-[22px] font-light text-[#222]">
    <div className="h-[26px] pl-[11px] flex items-center border-b border-[#9089c4] bg-gradient-to-b from-[#d2cfee] to-[#c0bce4] rounded-t-[3px]">
      {title}
    </div>
    {children}
  </fieldset>
);

const GroupBoxes = () => (
  <div className="flex gap-px">
    <Group title="边框">
      <div className="mt-[7px] pl-[13px] flex items-center">
        <span className="w-[154px]">颜色</span>
        <ColorField label="颜色" />
      </div>
      <div className="mt-[2px] ml-[10px] flex items-end">
        <label htmlFor="width" className="w-[157px] h-[31px] pl-1 flex items-center border-b border-[#b4b3b8]">宽度</label>
        <input
          id="width"
          defaultValue="15.00"
          className={`${FIELD} w-[119px] pl-[5px] text-[20px] font-normal font-['Liberation_Mono',monospace]`}
        />
        <input
          aria-label="单位"
          defaultValue="TW"
          className={`${FIELD} w-[35px] ml-[13px] pl-1 text-[20px] font-normal font-['Liberation_Mono',monospace]`}
        />
      </div>
    </Group>
    <Group title="底纹">
      <div className="mt-[7px] pl-[13px] flex items-center">
        <span className="w-[154px]">颜色</span>
        <ColorField label="底纹颜色" />
      </div>
      <div className="mt-[2px] ml-[10px] flex items-end">
        <label htmlFor="sat" className="w-[241px] h-[31px] pl-1 flex items-center border-b border-[#b4b3b8]">饱和</label>
        <input id="sat" className={`${FIELD} w-[47px] px-1`} />
        <span className="ml-[3px] mb-[3px] text-[20px] leading-6 font-normal font-['Liberation_Mono',monospace]">%</span>
      </div>
    </Group>
  </div>
);

const DesignToolbar = () => (
  <div className="h-[30px] shrink-0 flex items-center gap-[3px] bg-[#e9e9f5]">
    <YellowButton label="选择" on><PinIcon /></YellowButton>
    <ThinSep />
    <YellowButton label="绘制" on><PencilIcon /></YellowButton>
    <ThinSep />
    <YellowButton label="表格" on><GridIcon /></YellowButton>
    <ThinSep />
    <YellowButton label="复制"><CopyFormIcon /></YellowButton>
    <ZoomSelect value="75" />
    <YellowButton label="放大"><ZoomIcon /></YellowButton>
    <YellowButton label="缩小"><ZoomIcon out /></YellowButton>
    <ThinSep />
    <YellowButton label="对齐"><SnapIcon /></YellowButton>
    <ThinSep />
    <YellowButton label="网格" on><RasterIcon /></YellowButton>
    <YellowButton label="细网格" on><RasterIcon fine /></YellowButton>
    <ThinSep />
    <YellowButton label="标尺" on><RulerIcon /></YellowButton>
    <ThinSep />
    <YellowButton label="用户设置"><UserFormIcon /></YellowButton>
  </div>
);

const range = (n: number) => Array.from({ length: n }, (_, i) => i + 1);

const DesignRuler = () => (
  <svg className="w-[902px] h-5 ml-[25px] bg-white border border-black shrink-0" aria-hidden="true">
    <path d="M1 10l8-4v8zM714 6l8 4-8 4zM410 0h1v20h-1z" />
    {range(39)
      .filter((k) => k % 10 !== 0 || k > 30)
      .map((k) => (
        <rect key={k} x={Math.round(k * 22.5)} y="8" width="1" height="4" />
      ))}
    {[50, 100, 150].map((v) => (
      <text key={v} x={v * 4.5} y="15" textAnchor="middle" fontSize="14">
        {v}
      </text>
    ))}
  </svg>
);

const DesignVRuler = () => (
  <svg className="w-[21px] shrink-0 bg-white border-x border-t border-black" aria-hidden="true">
    <path d="M10 1l4 9H6zM9 9h2v206H9z" />
    {range(9).map((k) => (
      <rect key={k} x="8" y={Math.round(k * 22.5)} width="4" height="1" />
    ))}
    <text transform="translate(15 225) rotate(-90)" textAnchor="middle" fontSize="14">
      50
    </text>
  </svg>
);

const Cell = ({ width, text }: { width: string; text?: string }) => (
  <div className={`${width} border-r border-b border-black`}>
    <div className="h-full border-r border-b border-dotted border-black">{text}</div>
  </div>
);

const DesignCanvas = () => (
  <div className="w-[902px] ml-1 flex bg-white border-x border-t border-black overflow-hidden text-[18px] leading-[23px]">
    <div className="w-[722px] shrink-0 border-l border-r border-dotted border-black">
      <div className="h-[92px] flex"><Cell width="w-full" text="%LTYPE1" /></div>
      <div className="h-[90px] flex">
        <Cell width="w-[123px]" text="%LTYPE2" />
        <Cell width="w-[129px]" />
        <Cell width="w-[144px]" />
        <Cell width="w-[143px]" />
        <Cell width="flex-1" />
      </div>
      <div className="h-[90px] flex">
        <Cell width="w-[340px]" text="%LTYPE3" />
        <Cell width="flex-1" />
      </div>
    </div>
    <svg className="flex-1" aria-hidden="true">
      {range(9).map((r) =>
        range(7).map((c) => (
          <rect key={`${r}-${c}`} x={Math.round(c * 22.5) - 2} y={Math.round(r * 22.5)} width="1" height="1" />
        )),
      )}
    </svg>
  </div>
);

const Designer = () => (
  <div className="flex-1 min-h-0 flex border-l border-b border-[#9a95c9] bg-[#e0def4]">
    <div className="flex-1 min-w-0 ml-[6px] flex flex-col">
      <div className="flex-1 min-h-0 flex flex-col overflow-hidden pl-[3px] border-l-2 border-[#cecbe9] mr-1">
        <BorderToolbar />
        <GroupBoxes />
        <div className="h-3 shrink-0" />
        <DesignToolbar />
        <div className="flex-1 min-h-0 flex flex-col pt-px bg-[#e9e9f5]">
          <DesignRuler />
          <div className="flex-1 min-h-0 mt-1 flex">
            <DesignVRuler />
            <DesignCanvas />
          </div>
        </div>
      </div>
      <div className="mt-1 ml-px">
        <HScroll thumb="flex-1" rest="w-[34px]" />
      </div>
      <div className="h-5 shrink-0" />
    </div>
    <div className="w-[17px] mb-[46px] overflow-hidden flex flex-col items-start bg-[#fafafb]">
      <ScrollButton dir="down" />
      <div className={`${THUMB} w-[25px] h-[363px] ml-[2px] mt-px bg-[#e5e3f4]`}>
        <Grip />
      </div>
      <div className="flex-1" />
      <ScrollButton dir="up" />
      <ScrollButton dir="down" />
    </div>
  </div>
);

const Center = () => (
  <section className="flex-1 min-w-0 flex flex-col">
    <div className="flex-1 min-h-0 flex">
      <div className="flex-1 min-w-0 pl-[5px] flex flex-col">
        <Designer />
      </div>
      <div className="w-[25px] flex flex-col bg-[#fafafb]">
        <ScrollButton dir="up" />
        <ScrollButton dir="down" />
        <div className="flex-1" />
        <div className={`${THUMB} h-[292px] w-[21px] mx-auto mb-[2px] bg-gradient-to-r from-[#e9e7f6] to-[#dad7ef]`}>
          <Grip />
        </div>
        <ScrollButton dir="up" />
        <ScrollButton dir="down" />
      </div>
    </div>
    <div className="pr-[25px] pt-[2px]">
      <HScroll thumb="flex-1" rest="w-5" />
    </div>
    <div className="mr-[9px] ml-[10px] h-[9px] flex items-center justify-center bg-[#dadaeb]">
      <Dots layout="gap-1 pl-4" />
    </div>
    <div className="h-[37px] mr-[9px] ml-[10px] shrink-0 border-t border-r border-[#bdbad9] bg-[#cdcaea]">
      <div className="h-[29px] border-b border-[#bfbcdf]">
        <button
          type="button"
          aria-label="关闭"
          className="w-8 h-7 flex items-center justify-center rounded-[3px] border border-[#77714f] bg-gradient-to-b from-[#fefadb] to-[#fdeb9a]"
        >
          <CloseBoxIcon />
        </button>
      </div>
    </div>
  </section>
);

/* ---------- 右側プレビュー ---------- */

const PreviewToolbar = () => (
  <div className="h-[30px] shrink-0 flex items-center gap-[3px] overflow-hidden">
    <YellowButton label="固定" on><PinIcon /></YellowButton>
    <ThinSep />
    <YellowButton label="选取区域"><SelectAreaIcon /></YellowButton>
    <ThinSep />
    <YellowButton label="复制"><CopyFormIcon /></YellowButton>
    <ZoomSelect value="50" />
    <YellowButton label="放大"><ZoomIcon /></YellowButton>
    <YellowButton label="缩小"><ZoomIcon out /></YellowButton>
    <ThinSep />
    <YellowButton label="对齐"><SnapIcon /></YellowButton>
  </div>
);

const PreviewRuler = () => (
  <svg className="h-5 mt-px ml-[25px] -mr-1 bg-white border border-black shrink-0" aria-hidden="true">
    <path d="M15 9l10-5v10zM24 8h117v2H24zM159 8h600v2H159z" />
    {range(40)
      .filter((k) => k > 1 && k % 10 !== 0)
      .map((k) => (
        <rect key={k} x={k * 15} y="7" width="1" height="4" />
      ))}
    <text x="150" y="15" textAnchor="middle" fontSize="15">
      50
    </text>
  </svg>
);

const PreviewVRuler = () => (
  <svg className="w-5 ml-px shrink-0 bg-white border-x border-t border-black" aria-hidden="true">
    <path d="M9 8l5 9H4zM8 16h2v125H8zM8 159h2v127H8zM8 314h2v122H8zM8 464h2v800H8z" />
    {range(60)
      .filter((k) => k > 1 && k % 10 !== 0)
      .map((k) => (
        <rect key={k} x="7" y={k * 15} width="4" height="1" />
      ))}
    {[50, 100, 150].map((v) => (
      <text key={v} transform={`translate(14 ${v * 3}) rotate(-90)`} textAnchor="middle" fontSize="15">
        {v}
      </text>
    ))}
  </svg>
);

const Preview = () => (
  <section className="w-[303px] pt-[9px] shrink-0 flex flex-col overflow-hidden bg-[#e9e9f5]">
    <PreviewToolbar />
    <PreviewRuler />
    <div className="flex-1 min-h-0 mt-1 flex">
      <PreviewVRuler />
      <div className="flex-1 ml-1 relative bg-white border-l border-t border-black">
        <svg className="absolute inset-0 w-full h-full" aria-hidden="true">
          <defs>
            <pattern id="hatch" width="4" height="4" patternUnits="userSpaceOnUse">
              <path d="M-1 5L5 -1M-1 1L1 -1M3 5L5 3" stroke="#000" />
            </pattern>
          </defs>
          <rect x="10" y="2" width="2000" height="7" fill="url(#hatch)" />
          <rect x="10" y="2" width="7" height="2000" fill="url(#hatch)" />
          <path d="M17 9h2000v1H17zM16 9h1v2000h-1zM10 2h7v7h-7zM10 366h7v7h-7z" />
          <path d="M1 150.5h9M1 300.5h9M1 450.5h9" stroke="#000" strokeDasharray="1 1" />
        </svg>
        <div className="relative pl-[18px] pt-[10px] text-lg leading-[22px]">
          %WINDOW3
          <WindowIcon />
        </div>
      </div>
    </div>
  </section>
);

/* ---------- 入力バーと注釈 ---------- */

const InputBar = () => (
  <div className="absolute left-[1037px] top-0 z-20 h-11 flex items-start">
    <div className="mt-[5px] ml-[30px] h-[38px] w-[237px] pl-[27px] flex items-center gap-4 rounded-[3px] border border-[#bfcfe0] bg-white text-[#0070db]">
      <span className="text-[21px] leading-6 font-bold">英</span>
      <svg viewBox="0 0 18 18" className="w-[18px] h-[18px]" fill="currentColor" aria-hidden="true">
        <circle cx="3" cy="5" r="3" />
        <path d="M11 10a3 3 0 1 1 6 1c0 3-2 5-5 7 1-2 2-3 2-5-2 0-3-1-3-3z" />
      </svg>
      <svg viewBox="0 0 18 24" className="w-[18px] h-6" fill="none" stroke="currentColor" aria-hidden="true">
        <rect x="5" y="1" width="8" height="14" rx="4" fill="currentColor" />
        <path d="M1 10c0 10 16 10 16 0" strokeWidth="2" />
        <path d="M6 22h6" strokeWidth="2.400" />
      </svg>
      <svg viewBox="0 0 22 18" className="w-[22px] h-[18px]" fill="none" stroke="currentColor" aria-hidden="true">
        <rect x="1" y="1" width="20" height="16" rx="2" strokeWidth="2" />
        <path d="M2 5h18M2 9h18M2 13h18M6 2v14M10 2v11M14 2v11M17 2v14" strokeWidth="1.200" />
      </svg>
      <svg viewBox="0 0 24 22" className="w-[22px] h-[22px]" fill="currentColor" aria-hidden="true">
        <path d="M7 1c2 3 8 3 10 0l6 3v6h-4v10c0 1-1 2-2 2H7c-1 0-2-1-2-2V10H1V4z" />
      </svg>
      <svg viewBox="0 0 20 20" className="w-5 h-5" fill="none" stroke="currentColor" strokeWidth="2" aria-hidden="true">
        <rect x="1" y="1" width="7" height="7" rx="2" fill="currentColor" />
        <rect x="1" y="12" width="7" height="7" rx="2" fill="currentColor" />
        <rect x="12" y="12" width="7" height="7" rx="2" fill="currentColor" />
        <rect x="12" y="1" width="7" height="7" rx="2" strokeWidth="2.4" />
      </svg>
    </div>
    <svg viewBox="0 0 48 44" className="w-12 h-11 absolute left-0 top-0" fill="none" aria-hidden="true">
      <defs>
        <linearGradient id="logo" x1="0" y1="0" x2="0" y2="1">
          <stop offset="0" stopColor="#fb7038" />
          <stop offset="1" stopColor="#ee480d" />
        </linearGradient>
      </defs>
      <path d="M3 6L34 0c3-1 4 0 5 3l8 27c1 3 0 4-2 5-9 4-19 8-31 9-3 0-4-1-5-4L0 10c0-2 1-4 3-4z" fill="url(#logo)" />
      <path d="M37 9C23 8 8 11 9 17c1 7 31-1 30 8-1 8-17 9-28 8" stroke="#fff" strokeWidth="5.4" />
    </svg>
  </div>
);

export default function App() {
  return (
    <div className={`h-screen relative overflow-hidden flex flex-col bg-white text-black ${SANS}`}>
      <MenuBar />
      <MainToolbar />
      <InputBar />
      <div className="h-3 shrink-0 ml-[19px] bg-gradient-to-b from-white to-[#e6e5f2]" />
      <main className="flex-1 min-h-0 ml-[17px] flex flex-col border-l-2 border-[#dcdaea]">
        <TitleBar />
        <AppToolbar />
        <div className="flex-1 min-h-0 flex bg-[#e9e8f5]">
          <div className="w-[354px] shrink-0 pl-[9px] pt-[9px] flex flex-col relative">
            <FormTree />
            <div className="h-[9px] shrink-0 flex items-center justify-center bg-[#dadaeb]">
              <Dots layout="gap-px pl-2" />
            </div>
            <FieldTree />
          </div>
          <div className="w-[9px] mt-[9px] shrink-0 bg-[#dadaeb]" />
          <Center />
          <div className="w-[9px] mt-[9px] shrink-0 flex items-center justify-center pt-[190px] bg-[#dadaeb]">
            <Dots layout="flex-col gap-1" />
          </div>
          <Preview />
        </div>
      </main>
      <div className="absolute left-[376px] top-[408px] w-[830px] h-[245px] z-30 border-[3px] border-[#ff2010] rounded-[4px] pointer-events-none" />
      <p className="absolute right-[15px] bottom-[7px] text-[18px] leading-6 text-[#9b9b9b] font-['Roboto',sans-serif]">
        CSDN @1314lay_1007
      </p>
    </div>
  );
}
